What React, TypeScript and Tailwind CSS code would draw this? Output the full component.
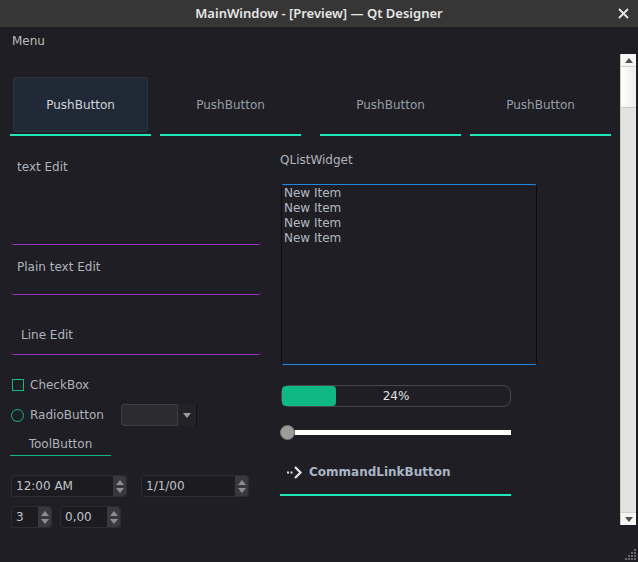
import React from "react";

// Small spin-box arrow column (up / down triangles)
function SpinArrows() {
    return (
        <div className="w-[13px] self-stretch bg-[#38383e] rounded-r-[3px] flex flex-col items-center justify-center gap-[3px]">
            <svg width="8" height="5" viewBox="0 0 8 5">
                <path d="M4 0L8 5H0Z" fill="#8c8c94" />
            </svg>
            <svg width="8" height="5" viewBox="0 0 8 5">
                <path d="M0 0H8L4 5Z" fill="#8c8c94" />
            </svg>
        </div>
    );
}

function SpinBox({ value, width }: { value: string; width: string }) {
    return (
        <div className={`flex h-[22px] ${width} border border-[#2c2c32] rounded-[3px] bg-[#1b1b20]`}>
            <div className="flex-1 flex items-center pl-[4px] text-[#c0c4cc]">{value}</div>
            <SpinArrows />
        </div>
    );
}

const pushCells = [
    { label: "PushButton", active: true, ml: "" },
    { label: "PushButton", active: false, ml: "ml-[9px]" },
    { label: "PushButton", active: false, ml: "ml-[19px]" },
    { label: "PushButton", active: false, ml: "ml-[9px]" },
];

const listItems = ["New Item", "New Item", "New Item", "New Item"];

export default function App() {
    return (
        <div className="w-[638px] h-[562px] bg-[#1e1e24] flex flex-col font-['DejaVu_Sans',sans-serif] text-[12px] overflow-hidden">
            {/* Title bar */}
            <div className="h-[27px] bg-[#363636] flex items-center shrink-0">
                <div className="w-[30px]" />
                <div className="flex-1 text-center text-[#e6e6e6] font-['Noto_Sans',sans-serif] font-semibold text-[13px]">
                    MainWindow - [Preview] — Qt Designer
                </div>
                <div className="w-[30px] flex items-center justify-center">
                    <svg width="11" height="11" viewBox="0 0 11 11">
                        <path d="M1 1L10 10M10 1L1 10" stroke="#e8e8e8" strokeWidth="1.8" />
                    </svg>
                </div>
            </div>

            {/* Menu bar */}
            <div className="h-[27px] flex items-center pl-[12px] text-[#bcbcbc] shrink-0">Menu</div>

            {/* Central area + scrollbar */}
            <div className="h-[471px] flex shrink-0">
                <div className="flex-1 flex flex-col">
                    {/* Push buttons */}
                    <div className="flex pl-[10px] pt-[23px]">
                        {pushCells.map((c, i) => (
                            <div key={i} className={`w-[141px] flex flex-col ${c.ml}`}>
                                {c.active ? (
                                    <div className="mx-[3px] h-[55px] bg-[#202a37] border border-[#2a3543] rounded-[2px] flex items-center justify-center text-[#d0d4da]">
                                        {c.label}
                                    </div>
                                ) : (
                                    <div className="h-[55px] flex items-center justify-center text-[#979da7]">{c.label}</div>
                                )}
                                <div className="mt-[2px] h-[2px] bg-[#1de9b6]" />
                            </div>
                        ))}
                    </div>

                    <div className="flex">
                        {/* Left column */}
                        <div className="w-[251px] ml-[10px] flex flex-col">
                            <div className="mt-[15px] ml-[1px] h-[94px] border-b border-[#9d2fbf] rounded-b-[3px] pt-[7px] pl-[6px] text-[#afb3bb]">
                                text Edit
                            </div>
                            <div className="mt-[7px] ml-[1px] h-[43px] border-b border-[#9d2fbf] rounded-b-[3px] pt-[6px] pl-[6px] text-[#afb3bb]">
                                Plain text Edit
                            </div>
                            <div className="mt-[23px] ml-[1px] h-[37px] border-b border-[#9d2fbf] rounded-b-[3px] flex items-center pl-[10px] pb-[2px] text-[#afb3bb]">
                                Line Edit
                            </div>

                            {/* CheckBox */}
                            <div className="mt-[22px] h-[16px] flex items-center pl-[2px] gap-[6px] text-[#afb3bb]">
                                <div className="w-[12px] h-[12px] border border-[#10b981]" />
                                CheckBox
                            </div>

                            {/* Radio + combo */}
                            <div className="mt-[11px] h-[22px] flex items-center">
                                <div className="flex items-center pl-[1px] gap-[6px] text-[#afb3bb] w-[111px]">
                                    <div className="w-[13px] h-[13px] rounded-full border border-[#10b981]" />
                                    RadioButton
                                </div>
                                <div className="flex h-[22px] w-[76px]">
                                    <div className="flex-1 bg-[#2b2b30] border border-[#3c3c42] rounded-l-[3px]" />
                                    <div className="w-[19px] bg-[#222227] border-r border-[#111114] flex items-center justify-center">
                                        <svg width="8" height="5" viewBox="0 0 8 5">
                                            <path d="M0 0H8L4 5Z" fill="#9a9aa2" />
                                        </svg>
                                    </div>
                                </div>
                            </div>

                            {/* ToolButton */}
                            <div className="mt-[8px] w-[101px] flex flex-col">
                                <div className="h-[20px] flex items-center justify-center text-[#afb3bb]">ToolButton</div>
                                <div className="mt-[1px] h-[1px] bg-[#10b981]" />
                            </div>

                            {/* Time / date */}
                            <div className="mt-[19px] ml-[1px] flex gap-[14px]">
                                <SpinBox value="12:00 AM" width="w-[116px]" />
                                <SpinBox value="1/1/00" width="w-[108px]" />
                            </div>

                            {/* Spin boxes */}
                            <div className="mt-[9px] ml-[1px] flex gap-[8px]">
                                <SpinBox value="3" width="w-[41px]" />
                                <SpinBox value="0,00" width="w-[61px]" />
                            </div>
                        </div>

                        {/* Right column */}
                        <div className="w-[257px] ml-[19px] flex flex-col">
                            <div className="mt-[17px] h-[15px] leading-[15px] text-[#afb3bb]">QListWidget</div>
                            <div className="mt-[16px] ml-[1px] h-[181px] border-t border-b border-x border-t-[#1e88e5] border-b-[#1e88e5] border-x-[#0c0c0f] rounded-[3px] pt-[1px] pl-[2px] text-[#b4b8c0]">
                                {listItems.map((t, i) => (
                                    <div key={i} className="leading-[15px]">{t}</div>
                                ))}
                            </div>

                            {/* Progress bar */}
                            <div className="mt-[20px] ml-[1px] w-[230px] h-[22px] rounded-[8px] border border-[#48484e] relative flex items-center justify-center">
                                <div className="absolute left-0 top-0 bottom-0 w-[54px] bg-[#0fb981] rounded-[4px]" />
                                <span className="relative text-[#e2e2e2]">24%</span>
                            </div>

                            {/* Slider */}
                            <div className="mt-[18px] w-[231px] h-[14px] flex items-center">
                                <div className="w-[15px] h-[15px] rounded-full bg-[#9c9c9c] border border-[#7a7a7a] shrink-0" />
                                <div className="flex-1 h-[5px] bg-white" />
                            </div>

                            {/* Command link button */}
                            <div className="mt-[23px] h-[20px] flex items-center pl-[7px] gap-[6px]">
                                <svg width="16" height="13" viewBox="0 0 16 13">
                                    <rect x="0" y="5.5" width="2" height="2" fill="#e4e4e4" />
                                    <rect x="3.5" y="5.5" width="2" height="2" fill="#e4e4e4" />
                                    <path d="M8 1L13.5 6.5L8 12" stroke="#e4e4e4" strokeWidth="2.2" fill="none" />
                                </svg>
                                <span className="font-bold text-[#a9b4c4]">CommandLinkButton</span>
                            </div>
                            <div className="mt-[12px] w-[231px] h-[2px] bg-[#1de9b6]" />
                        </div>
                    </div>
                </div>

                {/* Vertical scrollbar */}
                <div className="w-[16px] mr-[2px] flex flex-col bg-[#e3e3e3] border-l border-[#c8c8c8]">
                    <div className="h-[13px] bg-[#f6f6f6] border-b border-[#cfcfcf] flex items-center justify-center">
                        <svg width="8" height="5" viewBox="0 0 8 5">
                            <path d="M4 0L8 5H0Z" fill="#505050" />
                        </svg>
                    </div>
                    <div className="h-[41px] bg-gradient-to-r from-[#ffffff] to-[#ececec] border-b border-[#c6c6c6]" />
                    <div className="flex-1" />
                    <div className="h-[13px] bg-[#f6f6f6] border-t border-[#cfcfcf] flex items-center justify-center">
                        <svg width="8" height="5" viewBox="0 0 8 5">
                            <path d="M0 0H8L4 5Z" fill="#505050" />
                        </svg>
                    </div>
                </div>
            </div>

            {/* Status bar with size grip */}
            <div className="flex-1 flex items-end justify-end">
                <svg width="13" height="13" viewBox="0 0 13 13" className="mb-[1px] mr-[1px]">
                    {[
                        [10, 1],
                        [7, 4], [10, 4],
                        [4, 7], [7, 7], [10, 7],
                        [1, 10], [4, 10], [7, 10], [10, 10],
                    ].map(([x, y], i) => (
                        <rect key={i} x={x} y={y} width="2" height="2" fill="#6a6a70" />
                    ))}
                </svg>
            </div>
        </div>
    );
}
